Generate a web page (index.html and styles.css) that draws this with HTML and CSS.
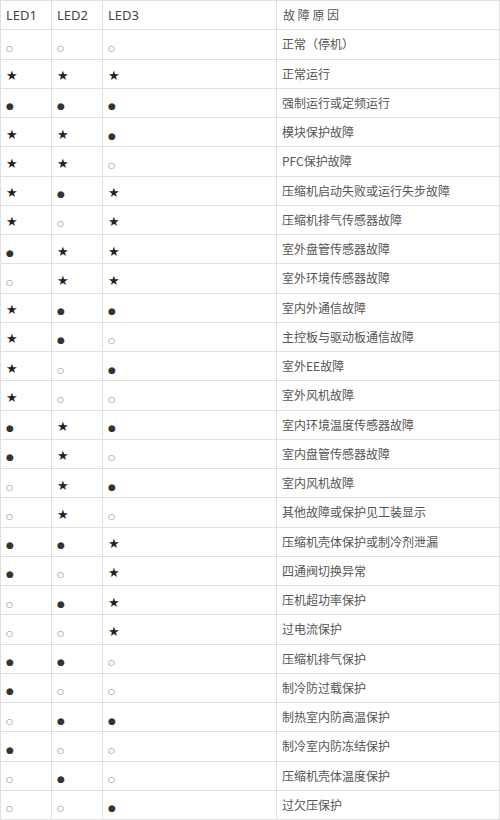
FILE: index.html
```html
<!DOCTYPE html>
<html lang="zh-CN">
<head>
<meta charset="utf-8">
<title>LED 故障原因</title>
<link rel="stylesheet" href="styles.css">
</head>
<body>
<table class="led-table">
<colgroup>
<col class="c-led1"><col class="c-led2"><col class="c-led3"><col class="c-reason">
</colgroup>
<thead>
<tr><th>LED1</th><th>LED2</th><th>LED3</th><th class="reason-head">故 障 原 因</th></tr>
</thead>
<tbody>
<tr><td><span class="off">○</span></td><td><span class="off">○</span></td><td><span class="off">○</span></td><td class="reason">正常（停机）</td></tr>
<tr><td><span class="star">★</span></td><td><span class="star">★</span></td><td><span class="star">★</span></td><td class="reason">正常运行</td></tr>
<tr><td><span class="on">●</span></td><td><span class="on">●</span></td><td><span class="on">●</span></td><td class="reason">强制运行或定频运行</td></tr>
<tr><td><span class="star">★</span></td><td><span class="star">★</span></td><td><span class="on">●</span></td><td class="reason">模块保护故障</td></tr>
<tr><td><span class="star">★</span></td><td><span class="star">★</span></td><td><span class="off">○</span></td><td class="reason">PFC保护故障</td></tr>
<tr><td><span class="star">★</span></td><td><span class="on">●</span></td><td><span class="star">★</span></td><td class="reason">压缩机启动失败或运行失步故障</td></tr>
<tr><td><span class="star">★</span></td><td><span class="off">○</span></td><td><span class="star">★</span></td><td class="reason">压缩机排气传感器故障</td></tr>
<tr><td><span class="on">●</span></td><td><span class="star">★</span></td><td><span class="star">★</span></td><td class="reason">室外盘管传感器故障</td></tr>
<tr><td><span class="off">○</span></td><td><span class="star">★</span></td><td><span class="star">★</span></td><td class="reason">室外环境传感器故障</td></tr>
<tr><td><span class="star">★</span></td><td><span class="on">●</span></td><td><span class="on">●</span></td><td class="reason">室内外通信故障</td></tr>
<tr><td><span class="star">★</span></td><td><span class="on">●</span></td><td><span class="off">○</span></td><td class="reason">主控板与驱动板通信故障</td></tr>
<tr><td><span class="star">★</span></td><td><span class="off">○</span></td><td><span class="on">●</span></td><td class="reason">室外EE故障</td></tr>
<tr><td><span class="star">★</span></td><td><span class="off">○</span></td><td><span class="off">○</span></td><td class="reason">室外风机故障</td></tr>
<tr><td><span class="on">●</span></td><td><span class="star">★</span></td><td><span class="on">●</span></td><td class="reason">室内环境温度传感器故障</td></tr>
<tr><td><span class="on">●</span></td><td><span class="star">★</span></td><td><span class="off">○</span></td><td class="reason">室内盘管传感器故障</td></tr>
<tr><td><span class="off">○</span></td><td><span class="star">★</span></td><td><span class="on">●</span></td><td class="reason">室内风机故障</td></tr>
<tr><td><span class="off">○</span></td><td><span class="star">★</span></td><td><span class="off">○</span></td><td class="reason">其他故障或保护见工装显示</td></tr>
<tr><td><span class="on">●</span></td><td><span class="on">●</span></td><td><span class="star">★</span></td><td class="reason">压缩机壳体保护或制冷剂泄漏</td></tr>
<tr><td><span class="on">●</span></td><td><span class="off">○</span></td><td><span class="star">★</span></td><td class="reason">四通阀切换异常</td></tr>
<tr><td><span class="off">○</span></td><td><span class="on">●</span></td><td><span class="star">★</span></td><td class="reason">压机超功率保护</td></tr>
<tr><td><span class="off">○</span></td><td><span class="off">○</span></td><td><span class="star">★</span></td><td class="reason">过电流保护</td></tr>
<tr><td><span class="on">●</span></td><td><span class="on">●</span></td><td><span class="off">○</span></td><td class="reason">压缩机排气保护</td></tr>
<tr><td><span class="on">●</span></td><td><span class="off">○</span></td><td><span class="off">○</span></td><td class="reason">制冷防过载保护</td></tr>
<tr><td><span class="off">○</span></td><td><span class="on">●</span></td><td><span class="on">●</span></td><td class="reason">制热室内防高温保护</td></tr>
<tr><td><span class="on">●</span></td><td><span class="off">○</span></td><td><span class="off">○</span></td><td class="reason">制冷室内防冻结保护</td></tr>
<tr><td><span class="off">○</span></td><td><span class="on">●</span></td><td><span class="off">○</span></td><td class="reason">压缩机壳体温度保护</td></tr>
<tr><td><span class="off">○</span></td><td><span class="off">○</span></td><td><span class="on">●</span></td><td class="reason">过欠压保护</td></tr>
</tbody>
</table>
</body>
</html>
```

FILE: styles.css
```css
html, body {
  margin: 0;
  padding: 0;
  background: #ffffff;
}

body {
  font-family: "Noto Sans CJK SC", "Noto Sans", sans-serif;
  color: #555555;
}

.led-table {
  width: 500px;
  table-layout: fixed;
  border-collapse: collapse;
  border: 1px solid #e3e3e3;
}

.c-led1 { width: 51px; }
.c-led2 { width: 51px; }
.c-led3 { width: 174px; }
.c-reason { width: auto; }

.led-table tr {
  height: 29.25px;
}

.led-table th,
.led-table td {
  height: 29.25px;
  padding: 0 0 0 5px;
  border: 1px solid #e0e0e0;
  text-align: left;
  vertical-align: middle;
  font-weight: normal;
  line-height: 1;
  box-sizing: border-box;
}

.led-table th {
  font-family: "Noto Sans", "Noto Sans CJK SC", sans-serif;
  font-size: 13px;
  color: #444444;
}

.led-table th.reason-head {
  font-family: "Noto Sans CJK SC", sans-serif;
  font-size: 12px;
  color: #555555;
  padding-left: 6px;
}

.reason {
  font-size: 12px;
  color: #555555;
  padding-left: 6px;
}

.off {
  font-family: "DejaVu Sans", sans-serif;
  font-size: 8px;
  color: #666666;
}

.on {
  font-family: "DejaVu Sans", sans-serif;
  font-size: 9px;
  color: #333333;
}

.star {
  font-family: "DejaVu Sans", sans-serif;
  font-size: 13px;
  color: #222222;
}
```
